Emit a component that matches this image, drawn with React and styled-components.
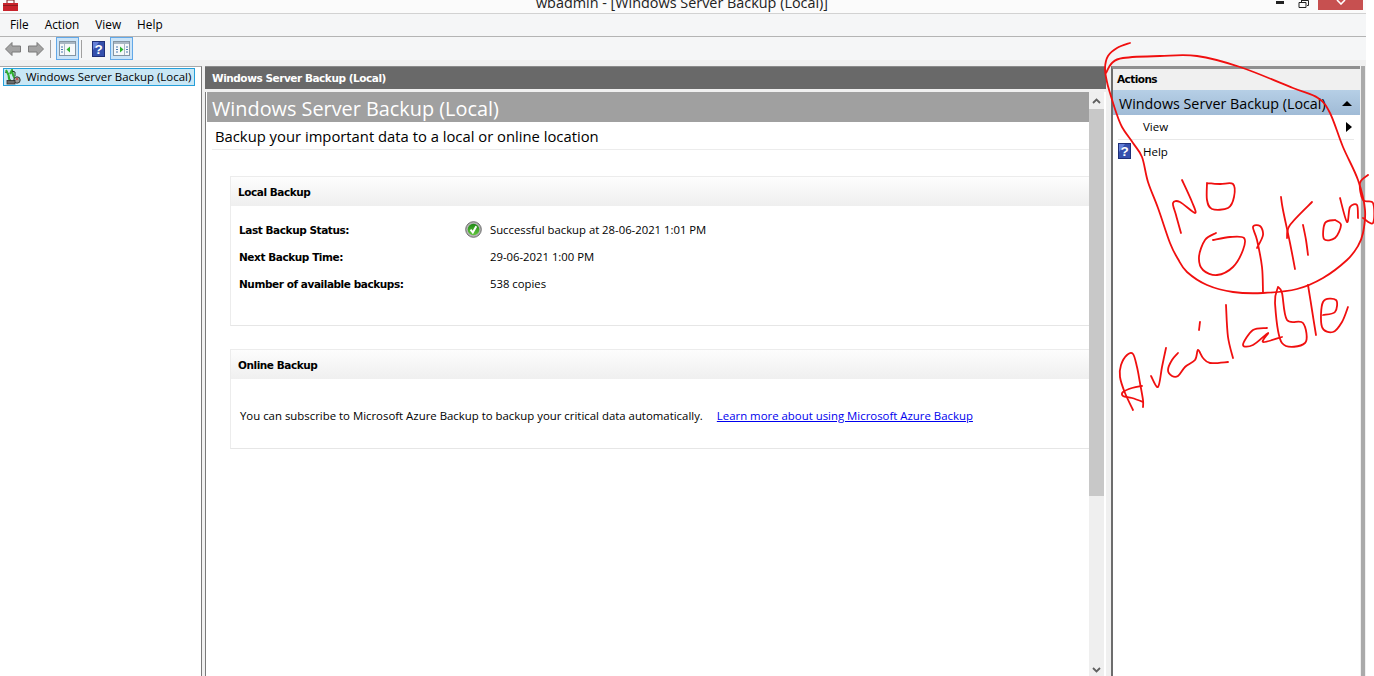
import React from "react";
import styled, { createGlobalStyle } from "styled-components";

const Global = createGlobalStyle`
  html, body { margin: 0; padding: 0; background: #fff; overflow: hidden; }
  #root { width: 1374px; height: 676px; }
  * { box-sizing: border-box; }
`;

const UI = `"Open Sans", "Noto Sans", sans-serif`;
const BOLD = `"DejaVu Sans", "Liberation Sans", sans-serif`;

const Page = styled.div`
  position: relative;
  width: 1374px;
  height: 676px;
  overflow: hidden;
  background: #fff;
  font-family: ${UI};
  color: #000;
`;
const Win = styled.div`
  width: 1366px;
  height: 676px;
  display: flex;
  flex-direction: column;
  background: #f0f0f0;
`;
const TitleBar = styled.div`
  height: 14px;
  flex: none;
  background: #fbfbfb;
  border-bottom: 1px solid #d2d2d2;
  display: flex;
  align-items: flex-end;
  overflow: hidden;
`;
const TitleIcon = styled.svg`
  width: 18px;
  height: 11px;
  margin-left: 2px;
  margin-bottom: 2px;
  flex: none;
`;
const TitleText = styled.div`
  flex: 1;
  text-align: center;
  font-size: 14.4px;
  line-height: 14px;
  color: #222;
  padding-left: 68px;
  margin-bottom: 3px;
  white-space: nowrap;
`;
const Controls = styled.div`
  display: flex;
  align-items: flex-start;
  align-self: flex-start;
  height: 10px;
  flex: none;
  margin-right: 3px;
`;
const MinGlyph = styled.div`
  width: 8px;
  height: 3px;
  margin-top: 1px;
  background: #222;
`;
const MaxGlyph = styled.svg`
  width: 12px;
  height: 8px;
  margin-left: 14px;
  margin-right: 8px;
`;
const CloseBtn = styled.div`
  width: 45px;
  height: 10px;
  background: #c75050;
  display: flex;
  justify-content: center;
`;
const MenuBar = styled.div`
  height: 23px;
  flex: none;
  background: #f5f6f7;
  border-bottom: 1px solid #b4b4b4;
  display: flex;
  align-items: center;
  padding: 0 0 2px 10px;
  gap: 16px;
  font-size: 11.8px;
`;
const MenuItem = styled.span`
  line-height: 20px;
`;
const ToolBar = styled.div`
  height: 23px;
  flex: none;
  background: #f5f6f7;
  display: flex;
  align-items: center;
  padding: 0 0 0 1px;
`;
const Tool = styled.div`
  width: ${p => p.$w || 23}px;
  height: 23px;
  display: flex;
  align-items: center;
  justify-content: center;
  flex: none;
  ${p => p.$active && `background:#cce4f7;border:1px solid #62a8e8;`}
`;
const Sep = styled.div`
  width: 1px;
  height: 18px;
  background: #a0a0a0;
  margin: 0 ${p => p.$r}px 0 ${p => p.$l}px;
  flex: none;
`;
const Body = styled.div`
  flex: 1;
  min-height: 0;
  display: flex;
  padding-top: 6px;
`;
const TreePane = styled.div`
  width: 202px;
  flex: none;
  background: #fff;
  border-top: 1px solid #a8a8a8;
  border-right: 1px solid #7a7a7a;
  padding: 1px 6px 0 3px;
`;
const TreeItem = styled.div`
  height: 18px;
  background: #c9e7f5;
  border: 1px solid #26a0da;
  display: flex;
  align-items: center;
  gap: 5px;
  font-size: 11.45px;
  line-height: 14px;
  padding-bottom: 1px;
  white-space: nowrap;
`;
const Center = styled.div`
  width: 901px;
  margin-left: 3px;
  flex: none;
  display: flex;
  flex-direction: column;
`;
const CenterHead = styled.div`
  height: 23px;
  flex: none;
  background: #696969;
  color: #fff;
  font-family: ${BOLD};
  font-weight: 700;
  font-size: 10.5px;
  letter-spacing: -0.45px;
  display: flex;
  align-items: center;
  padding-left: 7px;
  border-top: 1px solid #8a8a8a;
`;
const CenterBody = styled.div`
  flex: 1;
  min-height: 0;
  margin-top: 3px;
  background: #fff;
  border-left: 1px solid #7a7a7a;
  display: flex;
  padding-left: 1px;
`;
const Content = styled.div`
  width: 882px;
  flex: none;
  display: flex;
  flex-direction: column;
`;
const Banner = styled.div`
  height: 30px;
  flex: none;
  background: #a0a0a0;
  color: #fff;
  font-size: 19.85px;
  line-height: 33px;
  padding-left: 5px;
  white-space: nowrap;
`;
const Subtitle = styled.div`
  height: 28px;
  flex: none;
  margin-left: 5px;
  padding-left: 3px;
  border-bottom: 1px solid #ececec;
  font-size: 14.8px;
  line-height: 29px;
  white-space: nowrap;
`;
const Card = styled.section`
  margin-left: 23px;
  margin-top: ${p => p.$top}px;
  height: ${p => p.$h}px;
  flex: none;
  border-top: 1px solid #ececec;
  border-left: 1px solid #ececec;
  border-bottom: 1px solid #e6e6e6;
`;
const CardHead = styled.div`
  height: 29px;
  background: linear-gradient(#fdfdfd, #efefef);
  font-family: ${BOLD};
  font-weight: 700;
  font-size: 10.5px;
  letter-spacing: -0.45px;
  line-height: 31px;
  padding-left: 7px;
`;
const Rows = styled.div`
  padding: 10px 0 0 8px;
`;
const Row = styled.div`
  height: 27px;
  display: flex;
  align-items: center;
`;
const RowLabel = styled.div`
  width: 226px;
  flex: none;
  font-family: ${BOLD};
  font-weight: 700;
  font-size: 10.5px;
  letter-spacing: -0.43px;
`;
const RowIcon = styled.div`
  width: 25px;
  flex: none;
  display: flex;
`;
const RowValue = styled.div`
  font-size: 11.3px;
  white-space: nowrap;
`;
const Azure = styled.div`
  padding: 29px 0 0 9px;
  font-size: 11.4px;
  white-space: nowrap;
  display: flex;
  gap: 14px;
`;
const LinkText = styled.a`
  color: #0000ee;
  text-decoration: underline;
`;
const Scroll = styled.div`
  width: 15px;
  flex: none;
  background: #efefef;
  display: flex;
  flex-direction: column;
`;
const ScrollBtn = styled.div`
  height: 17px;
  flex: none;
  display: flex;
  align-items: center;
  justify-content: center;
`;
const ScrollBtnEnd = styled(ScrollBtn)`
  height: 13px;
  margin-top: auto;
`;
const Thumb = styled.div`
  height: 387px;
  flex: none;
  background: #c8c8c8;
`;
const ActionPane = styled.div`
  width: 249px;
  margin-left: 5px;
  flex: none;
  display: flex;
  flex-direction: column;
  background: #fff;
  border-left: 2px solid #6d6d6d;
  border-top: 3px solid #8f8f8f;
`;
const ActionsHead = styled.div`
  height: 21px;
  flex: none;
  background: #f0f0f0;
  font-family: ${BOLD};
  font-weight: 700;
  font-size: 10.5px;
  letter-spacing: -0.55px;
  line-height: 20px;
  padding-left: 4px;
`;
const ActionGroup = styled.div`
  height: 25px;
  flex: none;
  background: linear-gradient(#b6cfe6, #a0bbd6);
  display: flex;
  align-items: center;
  justify-content: space-between;
  font-size: 14.3px;
  padding: 1px 8px 0 6px;
  white-space: nowrap;
`;
const ActionRow = styled.div`
  height: 25px;
  flex: none;
  margin: 0 6px 0 5px;
  padding: 0 2px ${p => (p.$line ? 1 : 3)}px 0;
  display: flex;
  align-items: center;
  font-size: 11.5px;
  ${p => p.$line && `border-bottom: 1px solid #e8e8e8;`}
`;
const ActionIcon = styled.div`
  width: 25px;
  flex: none;
  display: flex;
`;
const Grow = styled.span`
  flex: 1;
`;
const RightStrip = styled.div`
  width: 5px;
  flex: none;
  background: #f0f0f0;
  border-left: 1px solid #f0f0f0;
  border-right: 4px solid #aaa;
`;
const Ink = styled.svg`
  position: absolute;
  left: 0;
  top: 0;
  width: 1374px;
  height: 676px;
  pointer-events: none;
  fill: none;
  stroke: #f00f0f;
  stroke-width: 1.8;
  stroke-linecap: round;
  stroke-linejoin: round;
`;

const Arrow = ({ right }) => (
  <svg width="16" height="14" viewBox="0 0 16 14">
    <path
      d={right ? "M9 .5l6.5 6.5L9 13.500V10H.5V4H9z" : "M7 .5L.5 7 7 13.500V10h8.500V4H7z"}
      fill="#a3a3a3"
      stroke="#7b7b7b"
    />
  </svg>
);
const PaneIcon = ({ right }) => (
  <svg width="17" height="15" viewBox="0 0 17 15">
    <rect x="0.5" y="0.5" width="16" height="14" fill="#f6f8fa" stroke="#8494a2" />
    <rect x="1" y="1" width="15" height="2" fill="#a9b7c4" />
    <path d={right ? "M11.500 3v11" : "M5.500 3v11"} stroke="#a9b7c4" fill="none" />
    <path d={right ? "M3 6h2M3 8.500h2M3 11h2M13 6h2M13 8.500h2M13 11h2" : "M2 6h2M2 8.500h2M2 11h2"} stroke="#4a78b0" fill="none" />
    <path d={right ? "M7 5.500l3.500 3-3.500 3z" : "M11 5.500L7.500 8.500l3.500 3z"} fill="#2fb52f" />
  </svg>
);
const HelpIcon = () => (
  <svg width="13" height="16" viewBox="0 0 13 16">
    <rect x="0.5" y="0.5" width="12" height="15" fill="#3550ad" stroke="#1f2f78" />
    <path d="M1 1h6L1 9z" fill="#6680d8" />
    <text x="6.500" y="12.800" textAnchor="middle" fontFamily="Liberation Sans, sans-serif" fontWeight="700" fontSize="13.500" fill="#fff">?</text>
  </svg>
);
const TreeIcon = () => (
  <svg width="17" height="16" viewBox="0 0 17 16" style={{ flex: "none" }}>
    <path d="M1 3l3 1 1 4 2 5" fill="none" stroke="#1c3c1c" strokeWidth="1" />
    <path d="M2 1l2.500 5 .5 4 2 3M6 5l2-4 1 5 2 4" fill="none" stroke="#2fb02f" strokeWidth="2" />
    <path d="M8 2l3 1 0 4" fill="none" stroke="#1c3c1c" strokeWidth="1" />
    <circle cx="13" cy="11" r="3.200" fill="#9a9a9a" stroke="#3a3a3a" />
    <rect x="12" y="9" width="2" height="2" fill="#c05050" />
    <rect x="3" y="11.500" width="8" height="3.500" fill="#6a6a6a" stroke="#2e2e2e" strokeWidth="0.800" />
  </svg>
);
const CheckIcon = () => (
  <svg width="17" height="17" viewBox="0 0 17 17">
    <defs>
      <linearGradient id="okFill" x1="0" y1="0" x2="0" y2="1">
        <stop offset="0" stopColor="#1f8a17" />
        <stop offset="1" stopColor="#62c63c" />
      </linearGradient>
    </defs>
    <circle cx="8.500" cy="8.500" r="7.800" fill="#b4b4b4" stroke="#6c6c6c" />
    <circle cx="8.500" cy="8.500" r="5.800" fill="url(#okFill)" />
    <path d="M5.500 8.700l2.300 2.800 3.500-6.300" fill="none" stroke="#fff" strokeWidth="2" />
  </svg>
);

const smooth = pts => {
  let d = `M${pts[0][0]} ${pts[0][1]}`;
  for (let i = 0; i < pts.length - 1; i++) {
    const p0 = pts[i - 1] || pts[i];
    const p1 = pts[i];
    const p2 = pts[i + 1];
    const p3 = pts[i + 2] || p2;
    const c1x = p1[0] + (p2[0] - p0[0]) / 6;
    const c1y = p1[1] + (p2[1] - p0[1]) / 6;
    const c2x = p2[0] - (p3[0] - p1[0]) / 6;
    const c2y = p2[1] - (p3[1] - p1[1]) / 6;
    d += `C${c1x.toFixed(1)} ${c1y.toFixed(1)} ${c2x.toFixed(1)} ${c2y.toFixed(1)} ${p2[0]} ${p2[1]}`;
  }
  return d;
};

const strokes = [
  [[1130,43],[1117,48],[1108,56],[1105,68],[1107,82],[1110,93],[1116,112],[1122,127],[1133,143],[1142,157],[1148,182],[1158,208],[1170,243],[1178,259],[1187,272],[1207,285],[1233,292],[1263,293],[1297,289],[1323,278],[1347,260],[1358,246],[1363,233],[1365,210],[1358,180],[1343,147],[1330,113],[1318,98],[1293,88],[1240,67],[1197,56],[1160,56],[1123,58],[1112,63],[1106,73]],
  [[1181,233],[1176,215],[1173,203],[1180,202],[1195,213],[1192,202],[1182,180]],
  [[1207,183],[1220,184],[1233,184],[1234,197],[1228,208],[1212,209],[1207,200],[1207,183]],
  [[1216,233],[1205,240],[1199,257],[1203,270],[1217,275],[1233,267],[1243,250],[1244,238],[1230,237],[1213,240]],
  [[1263,292],[1262,267],[1257,240],[1253,227],[1260,226],[1263,235],[1257,248]],
  [[1281,197],[1283,210],[1290,243],[1295,269]],
  [[1312,202],[1290,225],[1287,238]],
  [[1303,225],[1306,240],[1308,255]],
  [[1335,220],[1325,223],[1324,239],[1335,238],[1341,225],[1335,220]],
  [[1340,198],[1347,222],[1350,207],[1357,205],[1358,218]],
  [[1368,175],[1360,183],[1363,200],[1373,203],[1373,223],[1363,218]],
  [[1133,410],[1125,393],[1120,377],[1121,365],[1127,355],[1133,354],[1137,367],[1140,383],[1143,400],[1143,407]],
  [[1142,386],[1132,388],[1123,392],[1123,396],[1132,398],[1143,402]],
  [[1151,376],[1158,387],[1162,367],[1166,348]],
  [[1178,353],[1172,360],[1168,370],[1172,376],[1178,376],[1185,367],[1195,360],[1198,350],[1203,358],[1210,363],[1228,362]],
  [[1200,322],[1199,330]],
  [[1226,305],[1228,337],[1233,358]],
  [[1267,328],[1253,330],[1243,345],[1253,345],[1268,333],[1263,342],[1282,337]],
  [[1278,287],[1275,303],[1282,343],[1305,343],[1303,323],[1287,320],[1282,293],[1278,287]],
  [[1308,285],[1312,310],[1316,335]],
  [[1323,315],[1335,312],[1336,300],[1323,302],[1322,327],[1333,332],[1342,322],[1348,307]],
];

export default function App() {
  return (
    <Page>
      <Global />
      <Win>
        <TitleBar>
          <TitleIcon viewBox="0 0 18 11">
            <rect x="1" y="3" width="15" height="8" fill="#c8232c" />
            <path d="M5 3V0h7v3" fill="none" stroke="#7a1a1a" />
            <rect x="1" y="5" width="15" height="1" fill="#8c1d1d" />
          </TitleIcon>
          <TitleText>wbadmin - [Windows Server Backup (Local)]</TitleText>
          <Controls>
            <MinGlyph />
            <MaxGlyph viewBox="0 0 12 8">
              <path d="M3.500 0v2M3.500 .5h7v5H9M1 2.500h7v5H1z" fill="none" stroke="#222" />
            </MaxGlyph>
            <CloseBtn>
              <svg width="10" height="5" viewBox="0 0 10 5">
                <path d="M1 0l4 4 4-4" fill="none" stroke="#fff" strokeWidth="1.600" />
              </svg>
            </CloseBtn>
          </Controls>
        </TitleBar>
        <MenuBar>
          <MenuItem>File</MenuItem>
          <MenuItem>Action</MenuItem>
          <MenuItem>View</MenuItem>
          <MenuItem>Help</MenuItem>
        </MenuBar>
        <ToolBar>
          <Tool><Arrow /></Tool>
          <Tool><Arrow right /></Tool>
          <Sep $l={3} $r={5} />
          <Tool $active><PaneIcon /></Tool>
          <Sep $l={2} $r={4} />
          <Tool $w={24}><HelpIcon /></Tool>
          <Tool $active><PaneIcon right /></Tool>
        </ToolBar>
        <Body>
          <TreePane>
            <TreeItem><TreeIcon />Windows Server Backup (Local)</TreeItem>
          </TreePane>
          <Center>
            <CenterHead>Windows Server Backup (Local)</CenterHead>
            <CenterBody>
              <Content>
                <Banner>Windows Server Backup (Local)</Banner>
                <Subtitle>Backup your important data to a local or online location</Subtitle>
                <Card $top={26} $h={150}>
                  <CardHead>Local Backup</CardHead>
                  <Rows>
                    <Row>
                      <RowLabel>Last Backup Status:</RowLabel>
                      <RowIcon><CheckIcon /></RowIcon>
                      <RowValue>Successful backup at 28-06-2021 1:01 PM</RowValue>
                    </Row>
                    <Row>
                      <RowLabel>Next Backup Time:</RowLabel>
                      <RowIcon />
                      <RowValue>29-06-2021 1:00 PM</RowValue>
                    </Row>
                    <Row>
                      <RowLabel>Number of available backups:</RowLabel>
                      <RowIcon />
                      <RowValue>538 copies</RowValue>
                    </Row>
                  </Rows>
                </Card>
                <Card $top={23} $h={100}>
                  <CardHead>Online Backup</CardHead>
                  <Azure>
                    <span>You can subscribe to Microsoft Azure Backup to backup your critical data automatically.</span>
                    <LinkText href="#">Learn more about using Microsoft Azure Backup</LinkText>
                  </Azure>
                </Card>
              </Content>
              <Scroll>
                <ScrollBtn>
                  <svg width="9" height="6" viewBox="0 0 9 6"><path d="M1 5l3.500-3.500L8 5" fill="none" stroke="#606060" strokeWidth="1.800" /></svg>
                </ScrollBtn>
                <Thumb />
                <ScrollBtnEnd>
                  <svg width="9" height="6" viewBox="0 0 9 6"><path d="M1 1l3.500 3.500L8 1" fill="none" stroke="#606060" strokeWidth="1.800" /></svg>
                </ScrollBtnEnd>
              </Scroll>
            </CenterBody>
          </Center>
          <ActionPane>
            <ActionsHead>Actions</ActionsHead>
            <ActionGroup>
              Windows Server Backup (Local)
              <svg width="10" height="5" viewBox="0 0 10 5"><path d="M5 0l5 5H0z" fill="#000" /></svg>
            </ActionGroup>
            <ActionRow $line>
              <ActionIcon />
              <Grow>View</Grow>
              <svg width="6" height="10" viewBox="0 0 6 10"><path d="M0 0l6 5-6 5z" fill="#000" /></svg>
            </ActionRow>
            <ActionRow>
              <ActionIcon><HelpIcon /></ActionIcon>
              <Grow>Help</Grow>
            </ActionRow>
          </ActionPane>
          <RightStrip />
        </Body>
      </Win>
      <Ink viewBox="0 0 1374 676">
        {strokes.map((pts, i) => <path key={i} d={smooth(pts)} />)}
      </Ink>
    </Page>
  );
}
